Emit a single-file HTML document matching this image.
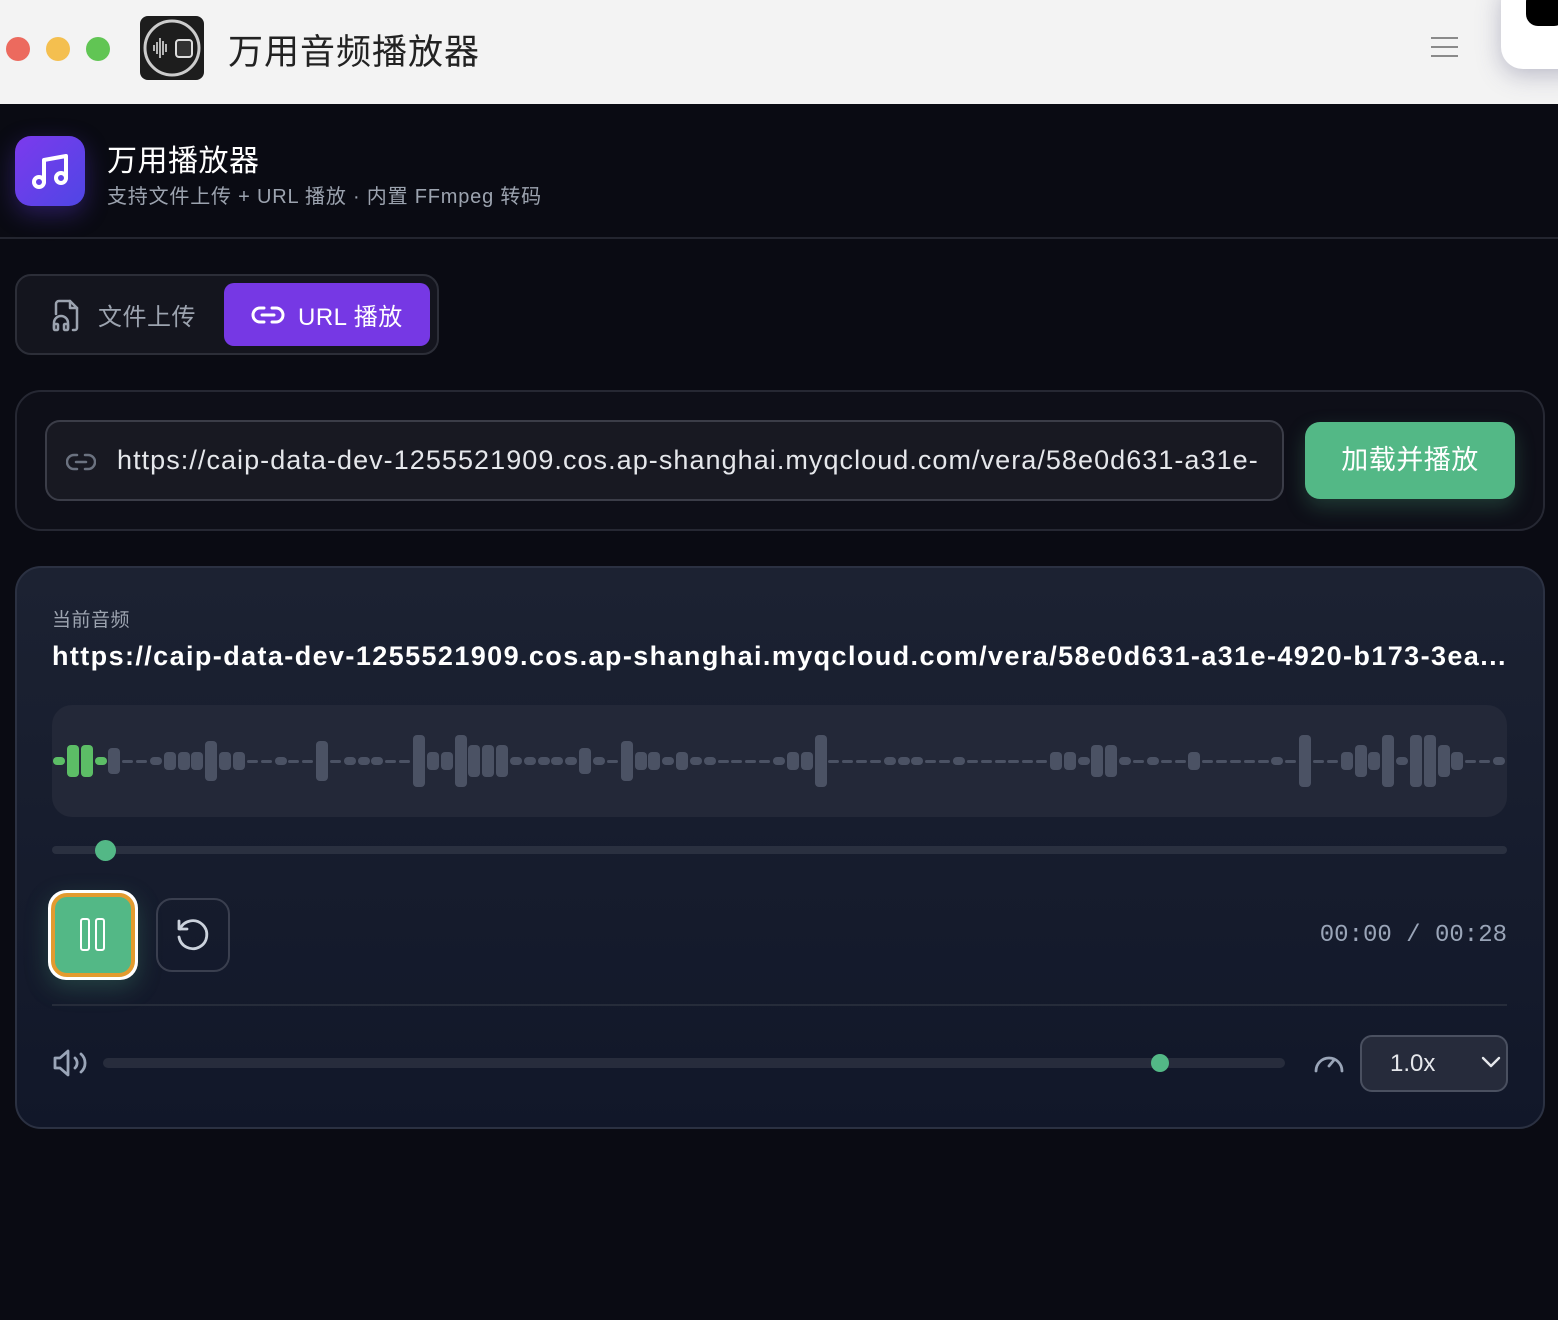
<!DOCTYPE html>
<html><head><meta charset="utf-8">
<style>
*{box-sizing:border-box;margin:0;padding:0}
body{width:1558px;height:1320px;overflow:hidden;background:#0a0b13;font-family:"Liberation Sans","Noto Sans CJK SC",sans-serif;position:relative}
.abs{position:absolute}
.tb{left:0;top:0;width:1558px;height:104px;background:#f3f3f3}
.tl{width:24px;height:24px;border-radius:50%;top:37px}
.wf{position:absolute;left:52px;top:705px;width:1455px;height:112px;background:#232838;border-radius:20px}
.bars{position:absolute;left:0;top:0;width:100%;height:100%}
.bars span{position:absolute;border-radius:4px;background:#4b5264}
</style></head><body>
<div class="abs tb"></div>
<div class="abs tl" style="left:6px;background:#ec6a5e"></div>
<div class="abs tl" style="left:46px;background:#f4bf4f"></div>
<div class="abs tl" style="left:86px;background:#61c554"></div>
<div class="abs" style="left:140px;top:16px;width:64px;height:64px;background:#1d1d1d;border-radius:8px">
<svg width="64" height="64" viewBox="0 0 64 64"><circle cx="32" cy="32" r="27" fill="none" stroke="#ccc" stroke-width="3"/>
<g stroke="#ddd" stroke-width="1.6"><line x1="14" y1="29" x2="14" y2="35"/><line x1="17" y1="26" x2="17" y2="38"/><line x1="20" y1="22" x2="20" y2="42"/><line x1="23" y1="25" x2="23" y2="39"/><line x1="26" y1="28" x2="26" y2="36"/></g>
<rect x="36" y="24" width="16" height="17" rx="3" fill="#333" stroke="#ddd" stroke-width="2"/></svg></div>
<div class="abs" style="left:228px;top:24px;font-size:35px;color:#222;letter-spacing:1px">万用音频播放器</div>
<div class="abs" style="left:1431px;top:37px;width:27px;height:2px;background:#8a8a8a"></div>
<div class="abs" style="left:1431px;top:46px;width:27px;height:2px;background:#8a8a8a"></div>
<div class="abs" style="left:1431px;top:55px;width:27px;height:2px;background:#8a8a8a"></div>
<div class="abs" style="left:1501px;top:-20px;width:90px;height:89px;background:#fff;border-radius:22px;box-shadow:0 6px 24px rgba(80,80,120,.35)"></div>
<div class="abs" style="left:1526px;top:-10px;width:40px;height:36px;background:#000;border-radius:12px"></div>

<div class="abs" style="left:15px;top:136px;width:70px;height:70px;border-radius:16px;background:linear-gradient(135deg,#7c3aed,#4f46e5);box-shadow:0 8px 24px rgba(99,60,230,.35)">
<svg width="70" height="70" viewBox="0 0 70 70" fill="none" stroke="#fff" stroke-width="4" stroke-linecap="round" stroke-linejoin="round"><circle cx="24" cy="46" r="5"/><circle cx="46" cy="42" r="5"/><path d="M29 46V24l22-4v22"/></svg></div>
<div class="abs" style="left:107px;top:136px;font-size:30px;color:#fff;letter-spacing:0.5px">万用播放器</div>
<div class="abs" style="left:107px;top:180px;font-size:20px;color:#9ca3af;letter-spacing:0.8px">支持文件上传 + URL 播放 · 内置 FFmpeg 转码</div>
<div class="abs" style="left:0;top:237px;width:1558px;height:2px;background:#23252f"></div>

<div class="abs" style="left:15px;top:274px;width:424px;height:81px;border-radius:16px;border:2px solid #2c2e38;background:#14151e"></div>
<svg class="abs" style="left:50px;top:298px" width="32" height="34" viewBox="0 0 32 34" fill="none" stroke="#9ca3af" stroke-width="2.5" stroke-linecap="round" stroke-linejoin="round"><path d="M6 16V6a3 3 0 0 1 3-3h11l7 7v20a2 2 0 0 1-2 2h-2"/><path d="M20 3v7h7"/><path d="M4 30v-5a7 7 0 0 1 14 0v5"/><rect x="4" y="26" width="4" height="6" rx="1"/><rect x="14" y="26" width="4" height="6" rx="1"/></svg>
<div class="abs" style="left:98px;top:297px;font-size:24px;color:#9ca3af;letter-spacing:0.5px">文件上传</div>
<div class="abs" style="left:224px;top:283px;width:206px;height:63px;border-radius:10px;background:#7638e4"></div>
<svg class="abs" style="left:251px;top:302px" width="34" height="26" viewBox="0 0 34 26" fill="none" stroke="#fff" stroke-width="3" stroke-linecap="round"><path d="M13 6H9a7 7 0 0 0 0 14h4M21 6h4a7 7 0 0 1 0 14h-4M11 13h12"/></svg>
<div class="abs" style="left:298px;top:297px;font-size:24px;color:#fff;letter-spacing:0.5px">URL 播放</div>

<div class="abs" style="left:15px;top:390px;width:1530px;height:141px;border-radius:26px;border:2px solid #262833;background:#0e0f18"></div>
<div class="abs" style="left:45px;top:420px;width:1239px;height:81px;border-radius:15px;border:2px solid #3b3d48;background:#181922;overflow:hidden">
<svg class="abs" style="left:19px;top:28px" width="30" height="24" viewBox="0 0 30 24" fill="none" stroke="#6b7280" stroke-width="2.5" stroke-linecap="round"><path d="M11 5H8a7 7 0 0 0 0 14h3M19 5h3a7 7 0 0 1 0 14h-3M10 12h10"/></svg>
<div class="abs" style="left:70px;top:23px;width:1140px;overflow:hidden;font-size:27px;color:#e5e7eb;white-space:nowrap;letter-spacing:1.05px">https://caip-data-dev-1255521909.cos.ap-shanghai.myqcloud.com/vera/58e0d631-a31e-4920-b173</div></div>
<div class="abs" style="left:1305px;top:422px;width:210px;height:77px;border-radius:15px;background:#53b886;box-shadow:0 8px 20px rgba(83,184,134,.25);color:#fff;font-size:27px;text-align:center;line-height:77px;letter-spacing:0.5px">加载并播放</div>

<div class="abs" style="left:15px;top:566px;width:1530px;height:563px;border-radius:26px;border:2px solid #2b3142;background:linear-gradient(180deg,#1c2232,#111729)"></div>
<div class="abs" style="left:52px;top:605px;font-size:19px;color:#9ca3af;letter-spacing:0.5px">当前音频</div>
<div class="abs" style="left:52px;top:641px;font-size:27px;font-weight:bold;color:#fff;white-space:nowrap;letter-spacing:1.4px">https://caip-data-dev-1255521909.cos.ap-shanghai.myqcloud.com/vera/58e0d631-a31e-4920-b173-3ea...</div>
<div class="wf"><div class="bars" id="bars"></div></div>
<div class="abs" style="left:52px;top:846px;width:1455px;height:8px;border-radius:4px;background:#2a3040"></div>
<div class="abs" style="left:95px;top:840px;width:21px;height:21px;border-radius:50%;background:#53b886"></div>

<div class="abs" style="left:48px;top:890px;width:90px;height:90px;border-radius:18px;background:#fff;box-shadow:0 8px 24px rgba(83,184,134,.25)"></div>
<div class="abs" style="left:51px;top:893px;width:84px;height:84px;border-radius:16px;background:#53b886;border:4px solid #e39b2f"></div>
<div class="abs" style="left:80px;top:918px;width:10px;height:33px;border:2.5px solid #fff;border-radius:3px"></div>
<div class="abs" style="left:95px;top:918px;width:10px;height:33px;border:2.5px solid #fff;border-radius:3px"></div>
<div class="abs" style="left:156px;top:898px;width:74px;height:74px;border-radius:16px;border:2px solid #3a3f4f"></div>
<svg class="abs" style="left:174px;top:916px" width="38" height="38" viewBox="0 0 38 38" fill="none" stroke="#cbd2dc" stroke-width="2.8" stroke-linecap="round" stroke-linejoin="round"><path d="M6 13a14 14 0 1 1-1 8"/><path d="M5 5v8h8"/></svg>
<div class="abs" style="left:1300px;top:922px;width:207px;text-align:right;font-family:'Liberation Mono','DejaVu Sans Mono',monospace;font-size:24px;color:#9aa5b8">00:00 / 00:28</div>
<div class="abs" style="left:52px;top:1004px;width:1455px;height:2px;background:#262c3a"></div>

<svg class="abs" style="left:52px;top:1048px" width="38" height="30" viewBox="0 0 38 30" fill="none" stroke="#9aa5b8" stroke-width="2.8" stroke-linecap="round" stroke-linejoin="round"><path d="M3 10h5l8-7v24l-8-7H3z"/><path d="M23 10a7 7 0 0 1 0 10M29 6a12 12 0 0 1 0 18"/></svg>
<div class="abs" style="left:103px;top:1058px;width:1182px;height:10px;border-radius:5px;background:#272c3c"></div>
<div class="abs" style="left:1151px;top:1054px;width:18px;height:18px;border-radius:50%;background:#53b886"></div>
<svg class="abs" style="left:1312px;top:1046px" width="34" height="30" viewBox="0 0 34 30" fill="none" stroke="#9aa5b8" stroke-width="2.8" stroke-linecap="round"><path d="M4 25a13 13 0 1 1 26 0"/><path d="M17 20l5-6"/></svg>
<div class="abs" style="left:1360px;top:1035px;width:148px;height:57px;border-radius:12px;border:2px solid #4a5060;background:#262b3b"></div>
<div class="abs" style="left:1390px;top:1050px;font-size:24px;color:#e5e7eb">1.0x</div>
<svg class="abs" style="left:1480px;top:1054px" width="22" height="16" viewBox="0 0 22 16" fill="none" stroke="#e5e7eb" stroke-width="2.4" stroke-linecap="round" stroke-linejoin="round"><path d="M3 4l8 8 8-8"/></svg>

<script>
var seq="oLLomddosssXssddoddXdoooddxssxLLLooooomodXssosooddddossx"+"ddddoooddoddddddssollododdsdddddodxddslsxoxxlsddo";
var H={d:3,o:8,s:18,m:26,X:40,L:32,l:32,x:52};
var c=document.getElementById('bars');var n=seq.length;
for(var i=0;i<n;i++){var ch=seq[i];var h=H[ch];var w=ch=='d'?11:12;
var x=1+i*(1440/(n-1));var s=document.createElement('span');
s.style.left=x+'px';s.style.top=(56-h/2)+'px';s.style.width=w+'px';s.style.height=h+'px';
if(i<4){s.style.background='#5cbd66';}c.appendChild(s);}
</script>
</body></html>
